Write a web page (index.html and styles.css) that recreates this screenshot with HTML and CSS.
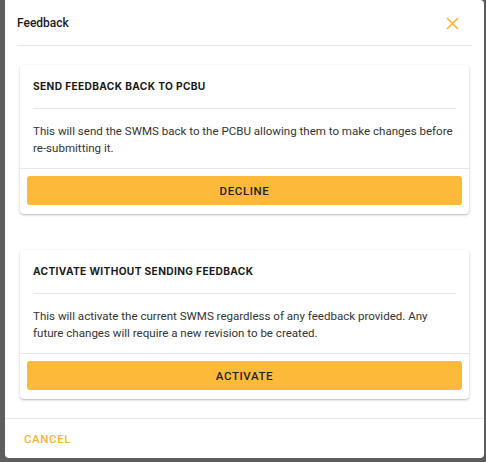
FILE: index.html
```html
<!DOCTYPE html>
<html>
<head>
<meta charset="utf-8">
<link rel="stylesheet" href="styles.css">
</head>
<body>
<div class="dialog">
  <div class="dialog-header">
    <span class="dialog-title">Feedback</span>
    <button class="close" aria-label="Close">
      <svg width="13" height="13" viewBox="0 0 13 13"><path d="M1 1L12 12M12 1L1 12" stroke="#fbb530" stroke-width="1.6" fill="none"/></svg>
    </button>
  </div>
  <div class="dialog-content">
    <div class="card">
      <div class="card-title">SEND FEEDBACK BACK TO PCBU</div>
      <div class="card-body">This will send the SWMS back to the PCBU allowing them to make changes before re-submitting it.</div>
      <div class="card-actions"><button class="btn">DECLINE</button></div>
    </div>
    <div class="card">
      <div class="card-title">ACTIVATE WITHOUT SENDING FEEDBACK</div>
      <div class="card-body">This will activate the current SWMS regardless of any feedback provided. Any future changes will require a new revision to be created.</div>
      <div class="card-actions"><button class="btn">ACTIVATE</button></div>
    </div>
  </div>
  <div class="dialog-footer">
    <button class="cancel">CANCEL</button>
  </div>
</div>
</body>
</html>
```
FILE: styles.css
```css
* { box-sizing: border-box; }
html, body { margin: 0; padding: 0; }
body {
  background: #5d5d5d;
  font-family: Roboto, "Liberation Sans", sans-serif;
  width: 486px;
  height: 462px;
  overflow: hidden;
}
.dialog {
  margin-left: 5px;
  width: 479px;
  height: 458px;
  background: #fff;
  border-radius: 0 4px 4px 4px;
  display: flex;
  flex-direction: column;
}
.dialog-header {
  margin: 0 12px;
  height: 46px;
  border-bottom: 1px solid #e8e8e8;
  display: flex;
  align-items: center;
  justify-content: space-between;
}
.dialog-title {
  font-size: 12px;
  font-weight: 500;
  color: #1c1c1c;
}
.close {
  background: none;
  border: 0;
  padding: 0;
  margin-right: 13px;
  margin-top: 2px;
  width: 13px;
  height: 13px;
  display: flex;
}
.dialog-content {
  padding: 19px 15px 19px;
  display: flex;
  flex-direction: column;
  gap: 36px;
  border-bottom: 1px solid #e8e8e8;
}
.card {
  background: #fff;
  border-radius: 4px;
  box-shadow: 0 1px 3px rgba(0,0,0,0.22), 0 1px 1px rgba(0,0,0,0.08);
}
.card-title {
  margin: 0 13px;
  padding: 14px 0 15px;
  line-height: 14px;
  font-family: Inter, Roboto, sans-serif;
  font-size: 10.2px;
  font-weight: 700;
  letter-spacing: 0.35px;
  color: #1a1a1a;
  border-bottom: 1px solid #e6e6e6;
}
.card-body {
  padding: 14px 13px 11px;
  font-size: 11.55px;
  line-height: 17px;
  color: #333;
}
.card-actions {
  border-top: 1px solid #e8e8e8;
  padding: 7px 7px 9px;
}
.btn {
  display: block;
  width: 100%;
  height: 29px;
  border: 0;
  border-radius: 3px;
  background: #fdba3a;
  font-family: Roboto, "Liberation Sans", sans-serif;
  font-size: 11.5px;
  font-weight: 500;
  letter-spacing: 0.6px;
  color: #222;
  padding: 0;
}
.dialog-footer {
  flex: 1;
  display: flex;
  align-items: center;
  padding-left: 19px;
}
.cancel {
  background: none;
  border: 0;
  padding: 0;
  font-family: Roboto, "Liberation Sans", sans-serif;
  font-size: 11.5px;
  font-weight: 500;
  letter-spacing: 0.6px;
  color: #fbb530;
}
```
